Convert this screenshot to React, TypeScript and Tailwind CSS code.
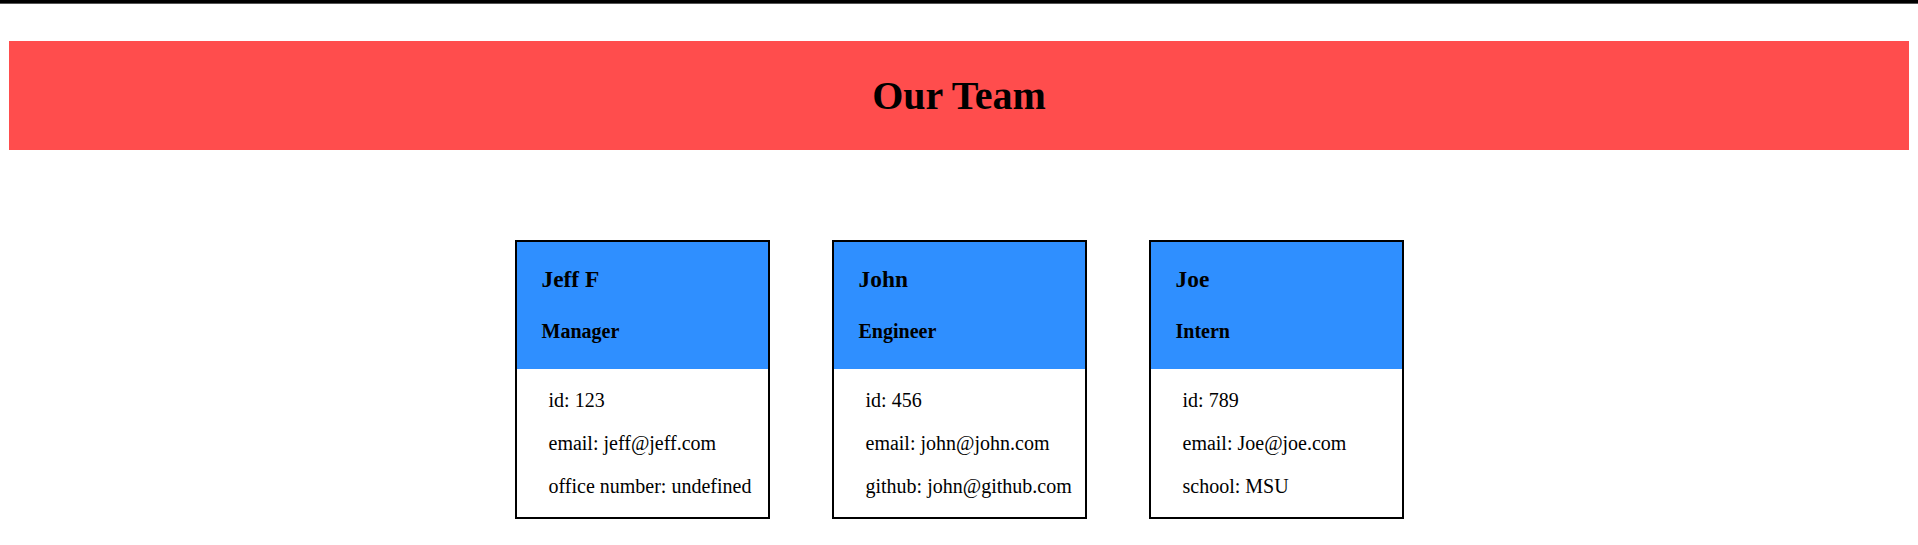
const team = [
  { name: "Jeff F", role: "Manager", id: 123, email: "jeff@jeff.com", extra: "office number: undefined" },
  { name: "John", role: "Engineer", id: 456, email: "john@john.com", extra: "github: john@github.com" },
  { name: "Joe", role: "Intern", id: 789, email: "Joe@joe.com", extra: "school: MSU" },
];

function Card({ member }: { member: (typeof team)[number] }) {
  return (
    <div className="w-[255px] box-border border-2 border-black bg-white">
      {/* header */}
      <div className="bg-[#2f8fff] pl-[25px] pt-[23px] pb-[26px]">
        <h3 className="text-[23.4px] leading-[28px] font-bold mb-[26px]">{member.name}</h3>
        <h4 className="text-[20px] leading-[24px] font-bold">{member.role}</h4>
      </div>
      <div className="pl-[32px] pt-[19px] pb-[19px] flex flex-col gap-[19px] text-[20px] leading-[24px] whitespace-nowrap">
        <p>id: {member.id}</p>
        <p>email: {member.email}</p>
        <p>{member.extra}</p>
      </div>
    </div>
  );
}

export default function App() {
  return (
    <div className="min-h-screen bg-white text-black font-['Liberation_Serif','Times_New_Roman',serif]">
      <div className="h-[4px] bg-black border-b border-[#555]" />
      <header className="mt-[37px] mx-[9px] h-[109px] bg-[#ff4d4d] flex items-center justify-center">
        <h1 className="text-[40px] leading-none font-bold">Our Team</h1>
      </header>
      <main className="mt-[90px] flex justify-center gap-[62px]">
        {team.map((m) => (
          <Card key={m.name} member={m} />
        ))}
      </main>
    </div>
  );
}
